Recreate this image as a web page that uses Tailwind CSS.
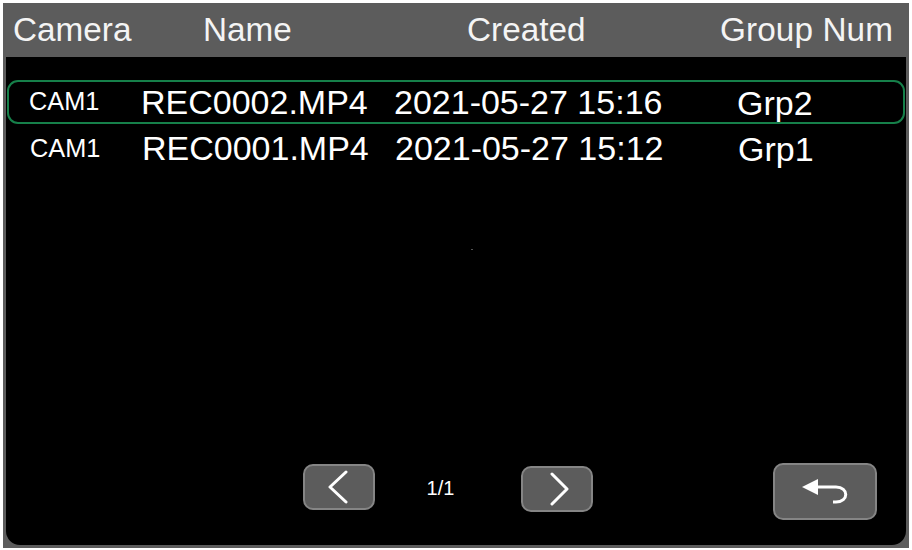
<!DOCTYPE html>
<html><head><meta charset="utf-8">
<script src="https://cdn.jsdelivr.net/npm/@tailwindcss/browser@4"></script>
</head>
<body class="bg-white">
<div class="w-[912px] h-[550px] bg-white pt-[3px] pl-[3px] pr-[3px] pb-[2px] font-['Liberation_Sans',Arial,sans-serif] text-white overflow-hidden">
  <div class="w-[906px] h-[545px] bg-[#5c5c5c] flex flex-col">
    <div class="h-[54px] shrink-0 flex items-center text-[33.3px] leading-none text-[#f4f4f4]">
      <span class="ml-[10px] w-[190px]">Camera</span>
      <span class="w-[264px]">Name</span>
      <span class="w-[253px]">Created</span>
      <span class="tracking-[0.1px]">Group Num</span>
    </div>
    <div class="relative flex-1 mx-[3px] mb-[3px] bg-black rounded-b-[14px] flex flex-col pt-[23px] px-px">
      <div class="h-[44px] w-[898px] shrink-0 border-2 border-[#16804a] rounded-[11px] flex items-center">
        <span class="ml-[20px] w-[112px] text-[25.3px] leading-none">CAM1</span>
        <span class="w-[253px] text-[34px] leading-none">REC0002.MP4</span>
        <span class="w-[343px] text-[34px] leading-none">2021-05-27 15:16</span>
        <span class="text-[34px] leading-none mt-[2px]">Grp2</span>
      </div>
      <div class="h-[44px] mt-[2px] shrink-0 flex items-center">
        <span class="ml-[23px] w-[112px] text-[25.3px] leading-none mt-[1px]">CAM1</span>
        <span class="w-[253px] text-[34px] leading-none">REC0001.MP4</span>
        <span class="w-[343px] text-[34px] leading-none">2021-05-27 15:12</span>
        <span class="text-[34px] leading-none mt-[2px]">Grp1</span>
      </div>
      <span class="absolute left-[465px] top-[192px] w-[2px] h-px bg-[#555]"></span>
      <div class="flex items-start mt-[293px] ml-[296px]">
        <button class="mt-[1px] w-[72px] h-[46px] bg-[#5c5c5c] border-2 border-[#858585] rounded-[10px] flex items-center justify-center">
          <svg width="24" height="34" viewBox="0 0 24 34" fill="none" stroke="#fff" stroke-width="3" stroke-linecap="round" stroke-linejoin="round"><path d="M19 2 L3 17 L19 32"/></svg>
        </button>
        <span class="w-[146px] pr-[15px] mt-[15px] text-center text-[20px] leading-none">1/1</span>
        <button class="mt-[3px] w-[72px] h-[46px] bg-[#5c5c5c] border-2 border-[#858585] rounded-[10px] flex items-center justify-center">
          <svg width="24" height="34" viewBox="0 0 24 34" fill="none" stroke="#fff" stroke-width="3" stroke-linecap="round" stroke-linejoin="round"><path d="M7 2 L22 17 L7 32"/></svg>
        </button>
        <button class="ml-[180px] w-[104px] h-[57px] bg-[#5c5c5c] border-2 border-[#858585] rounded-[10px] flex items-center justify-center">
          <svg width="46" height="26" viewBox="0 0 46 26" fill="none"><path d="M0 8 L16 0 L16 16 Z" fill="#fff"/><path d="M15 8 H34 C47 8 47 23 34 23 H31" stroke="#fff" stroke-width="3"/></svg>
        </button>
      </div>
    </div>
  </div>
</div>
</body></html>
